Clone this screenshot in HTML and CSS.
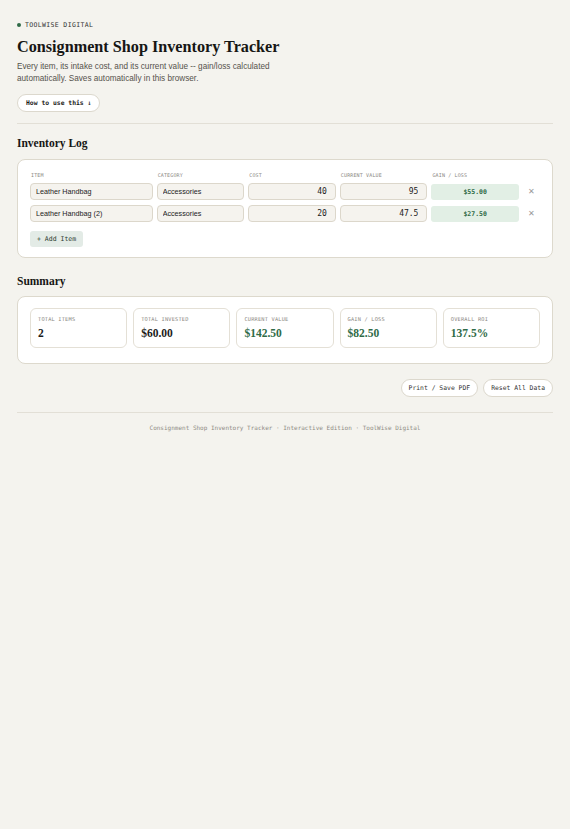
FILE: index.html
```html
<!DOCTYPE html>
<html lang="en">
<head>
  <meta charset="UTF-8">
  <title>Consignment Shop Inventory Tracker</title>
  <link rel="stylesheet" href="styles.css">
</head>
<body>
  <div class="page">

    <div class="eyebrow"><span class="dot"></span>TOOLWISE DIGITAL</div>
    <h1>Consignment Shop Inventory Tracker</h1>
    <p class="lead">Every item, its intake cost, and its current value -- gain/loss calculated automatically. Saves automatically in this browser.</p>
    <button class="pill how">How to use this ↓</button>

    <hr>

    <h2>Inventory Log</h2>
    <div class="card">
      <div class="grid head">
        <span>ITEM</span>
        <span>CATEGORY</span>
        <span>COST</span>
        <span>CURRENT VALUE</span>
        <span>GAIN / LOSS</span>
        <span></span>
      </div>
      <div class="grid row">
        <input type="text" value="Leather Handbag">
        <input type="text" value="Accessories">
        <input class="num" type="text" value="40">
        <input class="num" type="text" value="95">
        <div class="gain">$55.00</div>
        <button class="remove">✕</button>
      </div>
      <div class="grid row">
        <input type="text" value="Leather Handbag (2)">
        <input type="text" value="Accessories">
        <input class="num" type="text" value="20">
        <input class="num" type="text" value="47.5">
        <div class="gain">$27.50</div>
        <button class="remove">✕</button>
      </div>
      <button class="add">+ Add Item</button>
    </div>

    <h2 class="summary-title">Summary</h2>
    <div class="card stats-card">
      <div class="stats">
        <div class="stat">
          <div class="label">TOTAL ITEMS</div>
          <div class="value">2</div>
        </div>
        <div class="stat">
          <div class="label">TOTAL INVESTED</div>
          <div class="value">$60.00</div>
        </div>
        <div class="stat">
          <div class="label">CURRENT VALUE</div>
          <div class="value green">$142.50</div>
        </div>
        <div class="stat">
          <div class="label">GAIN / LOSS</div>
          <div class="value green">$82.50</div>
        </div>
        <div class="stat">
          <div class="label">OVERALL ROI</div>
          <div class="value green">137.5%</div>
        </div>
      </div>
    </div>

    <div class="actions">
      <button class="pill">Print / Save PDF</button>
      <button class="pill">Reset All Data</button>
    </div>

    <hr class="foot-rule">
    <p class="footer">Consignment Shop Inventory Tracker · Interactive Edition · ToolWise Digital</p>

  </div>
</body>
</html>
```

FILE: styles.css
```css
body {
  margin: 0;
  background: #f4f3ee;
  color: #1c1c1a;
  font-family: "Liberation Sans", Arial, sans-serif;
}
.page {
  padding: 20px 17px 40px;
}
.eyebrow {
  display: flex;
  align-items: center;
  gap: 4px;
  font-family: "DejaVu Sans Mono", monospace;
  font-size: 6.5px;
  line-height: 10px;
  letter-spacing: 0.35px;
  color: #333;
}
.dot {
  width: 4px;
  height: 4px;
  border-radius: 50%;
  background: #2f6b47;
}
h1 {
  margin: 7px 0 0;
  font-family: "Liberation Serif", "Times New Roman", serif;
  font-size: 16.2px;
  line-height: 20px;
  font-weight: bold;
  color: #161614;
}
.lead {
  margin: 4px 0 0;
  max-width: 275px;
  font-size: 8.2px;
  line-height: 12px;
  color: #55524c;
}
.pill {
  padding: 0 7px;
  height: 18px;
  border: 1px solid #dcd8cd;
  border-radius: 9px;
  background: #fff;
  font-family: "DejaVu Sans Mono", monospace;
  font-size: 6.4px;
  color: #333;
}
.how {
  margin-top: 9px;
  padding: 0 8px;
  font-weight: bold;
  color: #1c1c1a;
}
hr {
  margin: 11px 0 0;
  border: 0;
  border-top: 1px solid #e2dfd6;
}
h2 {
  margin: 12px 0 0;
  font-family: "Liberation Serif", "Times New Roman", serif;
  font-size: 11.5px;
  line-height: 14px;
  color: #161614;
}
.card {
  margin-top: 9px;
  padding: 12px 12px 10px;
  background: #fff;
  border: 1px solid #ddd9cd;
  border-radius: 8px;
}
.grid {
  display: grid;
  grid-template-columns: 1.4fr 1fr 1fr 1fr 1fr 17px;
  gap: 4px;
  align-items: center;
}
.head {
  margin-bottom: 5px;
  font-family: "DejaVu Sans Mono", monospace;
  font-size: 5px;
  line-height: 6px;
  letter-spacing: 0.15px;
  color: #8a877f;
}
.head span {
  padding-left: 1px;
}
.row {
  margin-bottom: 5px;
}
input {
  box-sizing: border-box;
  width: 100%;
  height: 17px;
  padding: 0 5px;
  border: 1px solid #dcd7cb;
  border-radius: 4px;
  background: #f5f3ee;
  font-family: "Liberation Sans", Arial, sans-serif;
  font-size: 7.2px;
  color: #222;
}
input.num {
  text-align: right;
  padding-right: 8px;
  font-family: "DejaVu Sans Mono", monospace;
  font-size: 8px;
}
.gain {
  height: 16px;
  line-height: 16px;
  border-radius: 3px;
  background: #e2efe5;
  text-align: center;
  font-family: "DejaVu Sans Mono", monospace;
  font-size: 6.5px;
  font-weight: bold;
  color: #2f6b47;
}
.remove {
  padding: 0;
  border: 0;
  background: none;
  font-size: 8px;
  color: #999;
  text-align: center;
}
.add {
  margin-top: 2px;
  height: 16px;
  padding: 0 7px;
  border: 0;
  border-radius: 3px;
  background: #e3ebe6;
  font-family: "DejaVu Sans Mono", monospace;
  font-size: 6.5px;
  color: #2b3a30;
}
.summary-title {
  margin-top: 16px;
}
.card.stats-card {
  margin-top: 8px;
  padding: 11px 12px 15px;
}
.stats {
  display: grid;
  grid-template-columns: repeat(5, 1fr);
  gap: 6px;
}
.stat {
  height: 40px;
  box-sizing: border-box;
  padding: 7px 7px 0;
  border: 1px solid #e4e0d6;
  border-radius: 6px;
}
.label {
  font-family: "DejaVu Sans Mono", monospace;
  font-size: 5.3px;
  line-height: 7px;
  letter-spacing: 0.2px;
  color: #8a877f;
}
.value {
  margin-top: 3px;
  font-family: "Liberation Serif", "Times New Roman", serif;
  font-size: 11.5px;
  line-height: 14px;
  font-weight: bold;
  color: #1c1c1a;
}
.value.green {
  color: #2f6b47;
}
.actions {
  display: flex;
  justify-content: flex-end;
  gap: 5px;
  margin-top: 15px;
}
.foot-rule {
  margin-top: 15px;
}
.footer {
  margin: 11px 0 0;
  text-align: center;
  font-family: "DejaVu Sans Mono", monospace;
  font-size: 6px;
  line-height: 8px;
  color: #8f8c85;
}
```
